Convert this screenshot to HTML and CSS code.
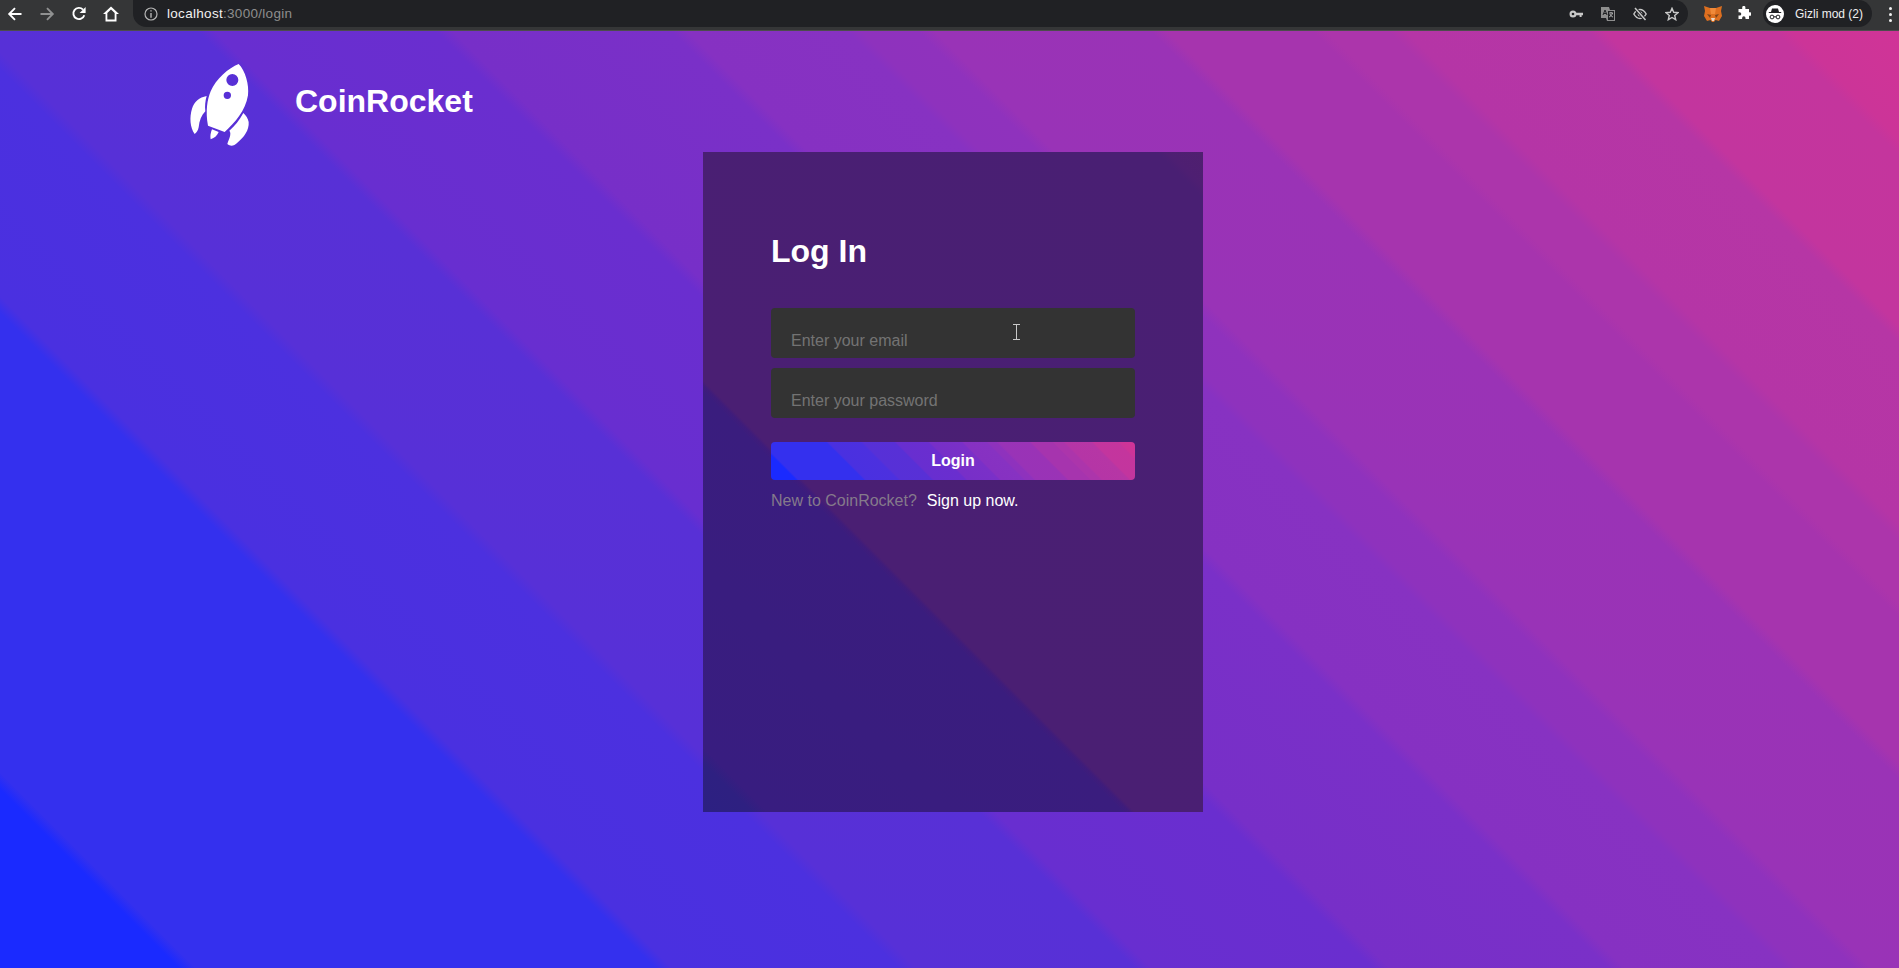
FILE: index.html
```html
<!DOCTYPE html>
<html lang="en">
<head>
<meta charset="utf-8">
<title>CoinRocket</title>
<link rel="stylesheet" href="styles.css">
</head>
<body>
<div class="browser">
  <div class="toolbar">
    <div class="nav">
      <svg class="nav-icon" viewBox="0 0 16 16"><path d="M14.5 8H2.5M8 2.2 2.2 8 8 13.8" class="stroke"/></svg>
      <svg class="nav-icon dim" viewBox="0 0 16 16"><path d="M1.5 8h12M8 2.2 13.8 8 8 13.8" class="stroke"/></svg>
      <svg class="nav-icon" viewBox="0 0 16 16"><path d="M13.3 9.2A5.6 5.6 0 1 1 12 3.6" class="stroke"/><path d="M14.6 1v6h-6z" class="solid"/></svg>
      <svg class="nav-icon" viewBox="1 1.3 14 13.6"><path d="M8 1.6 1 8h2.200v6.600h9.600V8H15zM4.800 13V7.200L8 4.200l3.200 3V13z" class="solid"/></svg>
    </div>
    <div class="urlbar">
      <svg class="info" viewBox="0 0 14 14"><circle cx="7" cy="7" r="6" class="thin"/><path d="M6.300 3.200h1.400v1.400H6.300zM6.300 5.900h1.400v4.800H6.300z" class="grey-fill"/></svg>
      <div class="url"><span class="host">localhost</span><span class="rest">:3000/login</span></div>
      <div class="url-icons">
        <svg class="small" viewBox="0 0 14 14"><path d="M4 3.500a3.500 3.500 0 1 1 0 7 3.500 3.500 0 0 1 0-7zM7 5.800h7v2.400h-1.400V10h-2V8.200H7z" class="soft-fill"/><circle cx="4" cy="7" r="1.300" fill="#202124"/></svg>
        <svg class="small" viewBox="0 0 14 14"><path d="M0 0h8l1 3h5v11H6l-1-3H0z" fill="#8e8e8e"/><path d="M7 4h6v9H7z" fill="#202124"/><path d="M8 6h4M10 5v1M11.500 6c-.5 2-2 3.500-3.500 4M9 7c.5 1.500 1.500 2.500 3 3" stroke="#d0d0d0" fill="none" stroke-width=".8"/><path d="M2 8l2-5 2 5M2.800 6.500h2.400" stroke="#202124" fill="none"/></svg>
        <svg class="small" viewBox="0 0 14 14"><path d="M.8 7C2.800 3.600 5 2.500 7 2.500S11.200 3.600 13.200 7C11.200 10.400 9 11.500 7 11.500S2.800 10.400.8 7z" class="soft-line"/><circle cx="7" cy="7" r="2.400" class="soft-fill"/><path d="M2 1l10.500 12" stroke="#202124" stroke-width="3.400"/><path d="M2 1l10.500 12" stroke="#c8c8c8" stroke-width="1.500"/></svg>
        <svg class="small" viewBox="0 0 14 14"><path d="M7 1.300 8.700 5.300l4.300.4-3.300 2.800 1 4.200L7 10.500l-3.700 2.200 1-4.200L1 5.700l4.300-.4z" class="soft-line"/></svg>
      </div>
    </div>
    <svg class="fox" viewBox="0 0 18 17">
      <path d="M0 1 6 3h6l6-2-1 5 1 5-3 5-3.500-1-1.500 2H8l-1.500-2L3 16l-3-5 1-5z" fill="#dd6f20"/>
      <path d="M6 3h6l-1 6H7z" fill="#f08a3a"/>
      <path d="M3 9l4 1-1 3zM15 9l-4 1 1 3z" fill="#7a4418"/>
      <path d="M7 13h4l-1 3H8z" fill="#e8d8c8"/>
    </svg>
    <svg class="puzzle" viewBox="0 0 14 14"><path d="M5.200 1.500a1.600 1.600 0 0 1 3.200 0V3h3.600v3.300h1a1.700 1.700 0 0 1 0 3.400h-1V13H8.500v-1.100a1.700 1.700 0 0 0-3.400 0V13H1.500V9.600h1.100a1.700 1.700 0 0 0 0-3.400H1.500V3h3.700z" fill="#fff"/></svg>
    <div class="profile">
      <svg class="avatar" viewBox="0 0 18 18"><circle cx="9" cy="9" r="9" fill="#fff"/><path d="M6 3.500h6L13 7h2.200v1H2.800V7H5z" fill="#202124"/><circle cx="6" cy="12" r="1.900" fill="none" stroke="#202124" stroke-width="1"/><circle cx="12" cy="12" r="1.900" fill="none" stroke="#202124" stroke-width="1"/><path d="M7.800 11.800h2.400" stroke="#202124"/></svg>
      <span class="profile-name">Gizli mod (2)</span>
    </div>
    <div class="menu"><i></i><i></i><i></i></div>
  </div>
  <div class="edge"></div>
  <main class="page">
    <header class="brand">
      <svg class="rocket" viewBox="0 0 240 282">
        <path fill-rule="evenodd" fill="#fff" d="M176 18C146 30 108 62 92 100 82 124 76 160 84 203L134 222C166 192 196 160 204 112 208 80 196 38 176 18ZM157 48A18 18 0 1 0 157 84 18 18 0 1 0 157 48ZM142 101A11 11 0 1 0 142 123 11 11 0 1 0 142 101Z"/>
        <path fill="#fff" d="M80 114C58 118 42 132 36 152 28 178 30 208 44 228 50 224 54 218 56 208 58 188 64 172 76 160 74 144 76 128 80 114Z"/>
        <path fill="#fff" d="M190 165C178 188 164 204 148 218 156 228 146 244 142 258 152 266 162 264 172 254 192 238 208 216 206 192 204 182 198 172 190 165Z"/>
        <path fill="#fff" d="M96 214 116 222C112 232 104 240 92 244 90 234 92 224 96 214Z"/>
      </svg>
      <div class="brand-name">CoinRocket</div>
    </header>
    <section class="card">
      <h1 class="title">Log In</h1>
      <form class="form">
        <div class="field">
          <input class="input" type="text" placeholder="Enter your email">
          <svg class="ibeam" viewBox="0 0 7 16"><path d="M0 .5h7M0 15.500h7M3.500 .5v15" stroke="#c9c9c9" fill="none"/></svg>
        </div>
        <div class="field"><input class="input" type="password" placeholder="Enter your password"></div>
        <button class="login" type="button">Login</button>
      </form>
      <p class="signup">New to CoinRocket?<a class="signup-link">Sign up now.</a></p>
    </section>
  </main>
</div>
</body>
</html>
```
FILE: styles.css
```css
:root {
  --bands: #1a2aff 0%, #1a2aff 6.3%, #3430ee 6.9%, #3430ee 23.1%, #4a30e0 23.7%, #4c30df 31.7%, #5730d7 32.3%, #5830d6 40%, #682ed0 40.6%, #6a2ecf 48.4%, #772fc8 49%, #7a30c8 56.7%, #8631c2 57.3%, #8732c2 62.9%, #8e32bd 63.4%, #8f32bd 65.4%, #9933b7 66%, #9a33b6 73.6%, #a634ae 74.2%, #a634ae 79.3%, #ac35ab 79.8%, #ac35ab 82%, #b535a6 82.6%, #b636a5 89%, #c3359e 89.6%, #c4359d 95.6%, #cc3498 96.2%, #d03497 100%;
}
* { box-sizing: border-box; }
html, body { margin: 0; height: 100%; }
body { font-family: "Liberation Sans", Arial, sans-serif; background: #333; overflow: hidden; }
.browser { height: 968px; display: flex; flex-direction: column; }

.toolbar { height: 30px; flex: none; display: flex; background: #353637; padding: 0 0 3px 0; align-items: stretch; }
.edge { height: 1px; flex: none; background: #4c4c4c; }
.nav { width: 133px; flex: none; display: flex; align-items: center; gap: 16px; padding-left: 7px; }
.nav-icon { width: 16px; height: 16px; flex: none; }
.nav-icon.dim { opacity: .45; }
.stroke { fill: none; stroke: #fff; stroke-width: 1.9; }
.solid { fill: #fff; }
.urlbar { width: 1555px; flex: none; display: flex; align-items: center; background: #202124; border-radius: 0 14px 14px 14px; padding-left: 11px; }
.info { width: 14px; height: 14px; flex: none; }
.thin { fill: none; stroke: #b5b5b5; stroke-width: 1.2; }
.grey-fill { fill: #b5b5b5; }
.url { margin-left: 9px; font-size: 13.5px; letter-spacing: .3px; flex: 1; }
.host { color: #f1f1f1; }
.rest { color: #8e8e8e; }
.url-icons { display: flex; gap: 18px; padding-right: 9px; }
.small { width: 14px; height: 14px; flex: none; }
.soft-fill { fill: #c8c8c8; }
.soft-line { fill: none; stroke: #c8c8c8; stroke-width: 1.4; }
.fox { width: 18px; height: 17px; flex: none; margin: 5px 0 0 16px; }
.puzzle { width: 14px; height: 14px; flex: none; margin: 6px 0 0 15px; }
.profile { width: 109px; flex: none; margin-left: 12px; display: flex; align-items: center; background: #202124; border-radius: 14px; padding-left: 3px; }
.avatar { width: 18px; height: 18px; flex: none; }
.profile-name { color: #f0f0f0; font-size: 12px; margin-left: 11px; white-space: nowrap; }
.menu { flex: none; margin: 7px 0 0 17px; display: flex; flex-direction: column; gap: 3px; }
.menu i { display: block; width: 3px; height: 3px; border-radius: 50%; background: #f0f0f0; }

.page { flex: 1; background: linear-gradient(45deg, var(--bands)); display: flex; flex-direction: column; min-height: 0; }
.brand { height: 121px; flex: none; display: flex; align-items: flex-start; padding: 27px 0 0 180px; }
.rocket { width: 80px; height: 94px; flex: none; }
.brand-name { margin: 25px 0 0 35px; font-size: 32px; font-weight: 700; color: #fff; line-height: 37px; }

.card { width: 500px; height: 660px; flex: none; align-self: center; margin-left: 7px; padding: 81px 68px 0; color: #fff;
  background: linear-gradient(45deg, #2c2082 0%, #2e2081 4.2%, #381d80 5.6%, #3a1d7e 36.2%, #3f1c7b 36.8%, #4a1f73 37.2%, #491f73 96%, #4e1f72 97%, #4f206f 100%); }
.title { margin: 0 0 38px; font-size: 32px; font-weight: 700; line-height: 37px; }
.form { display: flex; flex-direction: column; gap: 10px; }
.field { position: relative; }
.input { display: block; width: 100%; height: 50px; border: 0; border-radius: 4px; background: #333; color: #fff; padding: 16px 20px 0; font: 16px "Liberation Sans", Arial, sans-serif; outline: none; }
.input::placeholder { color: #737373; opacity: 1; }
.ibeam { position: absolute; left: 242px; top: 16px; width: 7px; height: 16px; }
.login { height: 38px; margin-top: 14px; border: 0; border-radius: 4px; color: #fff; font: 700 16px "Liberation Sans", Arial, sans-serif; background: linear-gradient(45deg, var(--bands)); padding: 0; }
.signup { margin: 12px 0 0; font-size: 16px; line-height: 18px; color: #857a8b; }
.signup-link { color: #fff; margin-left: 10px; }
```
